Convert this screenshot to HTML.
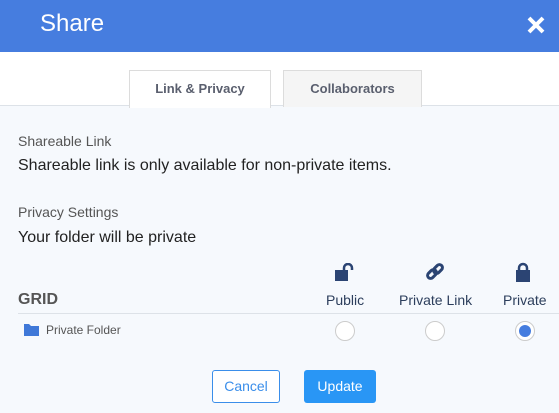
<!DOCTYPE html>
<html><head><style>
*{margin:0;padding:0;box-sizing:border-box}
body{width:559px;height:413px;overflow:hidden;font-family:"Liberation Sans",sans-serif;background:#f6f9fd;position:relative;color:#222}
.hdr{position:absolute;left:0;top:0;width:559px;height:52px;background:#467ddf;color:#fff}
.top{position:absolute;left:0;top:52px;width:559px;height:54px;background:#fff;border-bottom:1px solid #dde2e8}
.tab{position:absolute;top:70px;height:37px;border:1px solid #dcdcdc;border-bottom:none;font-weight:bold;font-size:13px;color:#5a5f6e;text-align:center;line-height:36px}
.a{position:absolute;white-space:nowrap}
.r{position:absolute;width:20px;height:20px;border-radius:50%;border:1px solid #ccc;background:#fff}
</style></head><body>
<div class="hdr"><div class="a" style="left:40px;top:10px;font-size:24px">Share</div>
<svg class="a" style="left:526px;top:15px" width="20" height="20"><path d="M3 3L17 17M17 3L3 17" stroke="#fff" stroke-width="4"/></svg></div>
<div class="top"></div>
<div class="tab" style="left:129px;width:142px;background:#fff;height:38px">Link &amp; Privacy</div>
<div class="tab" style="left:283px;width:139px;background:#f5f5f5">Collaborators</div>
<div class="a" style="left:18px;top:133px;font-size:14px;color:#555">Shareable Link</div>
<div class="a" style="left:18px;top:157px;font-size:16px">Shareable link is only available for non-private items.</div>
<div class="a" style="left:18px;top:204px;font-size:14px;color:#555">Privacy Settings</div>
<div class="a" style="left:18px;top:229px;font-size:16px">Your folder will be private</div>
<svg class="a" style="left:334px;top:263px" width="22" height="18"><rect x="1" y="7" width="13" height="11" fill="#2b4473"/><path d="M10 8V5a4 4 0 0 1 8 0v2" fill="none" stroke="#2b4473" stroke-width="2.5"/></svg>
<svg class="a" style="left:425px;top:262px" width="20" height="20"><g fill="none" stroke="#2b4473" stroke-width="3"><rect x="2" y="9" width="10" height="6" rx="3" transform="rotate(-45 7 12)"/><rect x="8" y="4" width="10" height="6" rx="3" transform="rotate(-45 13 7)"/></g></svg>
<svg class="a" style="left:515px;top:262px" width="16" height="20"><rect x="1" y="8" width="14" height="12" fill="#2b4473"/><path d="M4 9V6a4 4 0 0 1 8 0v3" fill="none" stroke="#2b4473" stroke-width="2.5"/></svg>
<div class="a" style="left:326px;top:292px;font-size:14px;color:#2c3e5c">Public</div>
<div class="a" style="left:399px;top:292px;font-size:14px;color:#2c3e5c">Private Link</div>
<div class="a" style="left:503px;top:292px;font-size:14px;color:#2c3e5c">Private</div>
<div class="a" style="left:18px;top:291px;font-size:16px;font-weight:bold;color:#555">GRID</div>
<div class="a" style="left:18px;top:313px;width:541px;height:1px;background:#dde2e8"></div>
<svg class="a" style="left:24px;top:323px" width="15" height="13"><path d="M0 1h5l2 2h8v10H0z" fill="#3f78d8"/></svg>
<div class="a" style="left:46px;top:323px;font-size:12px;color:#555">Private Folder</div>
<div class="r" style="left:335px;top:321px"></div>
<div class="r" style="left:425px;top:321px"></div>
<div class="r" style="left:515px;top:321px"><div style="position:absolute;left:3px;top:3px;width:12px;height:12px;border-radius:50%;background:#467ddf"></div></div>
<div class="a" style="left:212px;top:370px;width:68px;height:33px;border:1px solid #3a8eea;border-radius:3px;background:#fff;color:#3a8eea;font-size:14px;text-align:center;line-height:31px">Cancel</div>
<div class="a" style="left:304px;top:370px;width:72px;height:33px;border-radius:3px;background:#2996f5;color:#fff;font-size:14px;text-align:center;line-height:33px">Update</div>
</body></html>
